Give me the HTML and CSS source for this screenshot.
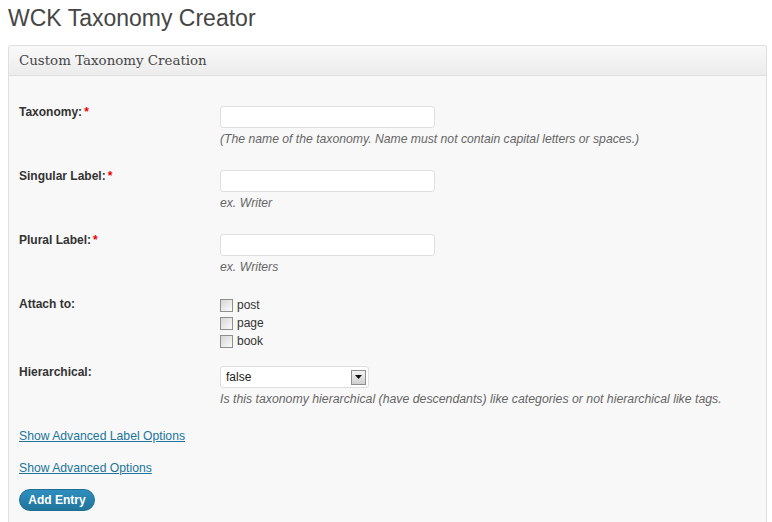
FILE: index.html
```html
<!DOCTYPE html>
<html>
<head>
<meta charset="utf-8">
<title>WCK Taxonomy Creator</title>
<link rel="stylesheet" href="styles.css">
</head>
<body>
<h1 class="page-title">WCK Taxonomy Creator</h1>
<div class="panel">
  <div class="panel-head">Custom Taxonomy Creation</div>
  <div class="panel-body">
    <div class="row">
      <label class="label">Taxonomy:<span class="req">*</span></label>
      <div class="field">
        <input class="text" type="text">
        <p class="desc">(The name of the taxonomy. Name must not contain capital letters or spaces.)</p>
      </div>
    </div>
    <div class="row">
      <label class="label">Singular Label:<span class="req">*</span></label>
      <div class="field">
        <input class="text" type="text">
        <p class="desc">ex. Writer</p>
      </div>
    </div>
    <div class="row">
      <label class="label">Plural Label:<span class="req">*</span></label>
      <div class="field">
        <input class="text" type="text">
        <p class="desc">ex. Writers</p>
      </div>
    </div>
    <div class="row row-checks">
      <label class="label">Attach to:</label>
      <div class="field checks">
        <label class="check"><span class="box"></span>post</label>
        <label class="check"><span class="box"></span>page</label>
        <label class="check"><span class="box"></span>book</label>
      </div>
    </div>
    <div class="row">
      <label class="label">Hierarchical:</label>
      <div class="field">
        <div class="select"><span class="select-val">false</span><span class="select-btn"><svg width="7" height="4" viewBox="0 0 7 4"><path d="M0 0h7L3.5 4z" fill="#111"/></svg></span></div>
        <p class="desc desc-wide">Is this taxonomy hierarchical (have descendants) like categories or not hierarchical like tags.</p>
      </div>
    </div>
    <a class="link link-first" href="#">Show Advanced Label Options</a>
    <a class="link" href="#">Show Advanced Options</a>
    <button class="btn" type="button">Add Entry</button>
  </div>
</div>
</body>
</html>
```
FILE: styles.css
```css
html, body {
  margin: 0;
  padding: 0;
  background: #fff;
  font-family: "Liberation Sans", Arial, sans-serif;
  font-size: 12px;
  color: #333;
  overflow: hidden;
}
.page-title {
  margin: 0;
  padding: 4px 0 0 8px;
  font-weight: normal;
  font-size: 23px;
  line-height: 29px;
  color: #464646;
  height: 41px;
  box-sizing: border-box;
}
.panel {
  margin-left: 8px;
  width: 759px;
  border: 1px solid #dfdfdf;
  border-bottom: none;
  border-radius: 3px 3px 0 0;
  background: #f8f8f8;
  margin-top: 4px;
  height: 477px;
  box-sizing: border-box;
}
.panel-head {
  height: 30px;
  box-sizing: border-box;
  padding: 0 10px;
  line-height: 30px;
  font-family: "DejaVu Serif", Georgia, serif;
  font-size: 13.4px;
  color: #464646;
  background: linear-gradient(#f9f9f9, #ececec);
  border-bottom: 1px solid #dfdfdf;
  border-radius: 3px 3px 0 0;
}
.panel-body {
  padding: 18px 10px 0 10px;
  display: flex;
  flex-direction: column;
  align-items: flex-start;
}
.row {
  display: grid;
  grid-template-columns: 201px 1fr;
  padding: 12px 0 11px;
  width: 100%;
}
.row-checks {
  padding-bottom: 4px;
}
.label {
  font-weight: bold;
  line-height: 13px;
  color: #333;
}
.req {
  color: #e00;
  margin-left: 2px;
}
.field {
  display: flex;
  flex-direction: column;
  align-items: flex-start;
}
.text {
  width: 215px;
  height: 22px;
  box-sizing: border-box;
  border: 1px solid #dfdfdf;
  border-radius: 3px;
  background: #fff;
  margin: 0;
  padding: 0 4px;
}
.desc {
  margin: 3px 0 0 0;
  font-style: italic;
  font-size: 12.2px;
  line-height: 16px;
  color: #666;
}
.desc-wide {
  font-size: 12.3px;
}
.checks {
  margin-top: -2px;
}
.check {
  display: flex;
  align-items: center;
  height: 18px;
  line-height: 18px;
  color: #333;
}
.box {
  width: 11px;
  height: 11px;
  border: 1px solid #8f8f8f;
  background: linear-gradient(135deg, #d6d6d6, #fbfbfb);
  margin-right: 4px;
}
.select {
  width: 149px;
  height: 22px;
  box-sizing: border-box;
  border: 1px solid #dfdfdf;
  border-radius: 3px;
  background: #fff;
  display: flex;
  align-items: center;
  justify-content: space-between;
  padding: 0 2px 0 5px;
  color: #222;
}
.select-btn {
  width: 15px;
  height: 15px;
  box-sizing: border-box;
  border: 1px solid #8e8e8e;
  background: linear-gradient(#f3f3f3, #cfcfcf);
  display: flex;
  align-items: center;
  justify-content: center;
}
.link {
  color: #21759b;
  text-decoration: underline;
  font-size: 12.2px;
  line-height: 16px;
  margin-top: 16px;
}
.link-first {
  margin-top: 10px;
}
.btn {
  margin-top: 13px;
  width: 76px;
  height: 22px;
  border: 1px solid #1f6d92;
  border-radius: 11px;
  background: linear-gradient(#2e8ec0, #21759b);
  color: #fff;
  font-family: "Liberation Sans", Arial, sans-serif;
  font-weight: bold;
  font-size: 12px;
  padding: 0;
  cursor: pointer;
}
```
